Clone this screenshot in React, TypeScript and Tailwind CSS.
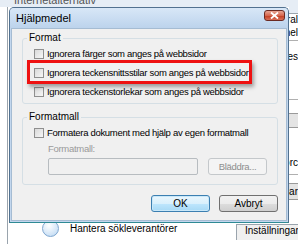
import React from 'react';

const font = "font-['Liberation_Sans',Arial,sans-serif]";

function Check() {
  return (
    <span className="w-[10px] h-[10px] shrink-0 border border-[#8f8f8f] bg-[linear-gradient(135deg,#d9d9d9,#f7f7f7)]" />
  );
}

function CheckRow({ label, h = 'h-[19px]' }: { label: string; h?: string }) {
  return (
    <div className={`${h} flex items-center gap-[3px] pl-[11px]`}>
      <Check />
      <span className="leading-[12px] whitespace-nowrap">{label}</span>
    </div>
  );
}

function VistaButton({ children, primary = false, disabled = false }: { children: React.ReactNode; primary?: boolean; disabled?: boolean }) {
  return (
    <div
      className={`w-[59px] h-[17px] flex items-center justify-center rounded-[3px] border leading-[12px] ${
        disabled
          ? 'border-[#c4c8cb] bg-[#f4f4f4] text-[#8d8d8d]'
          : primary
          ? 'border-[#3c7fb1] bg-[linear-gradient(#eaf6fd_0%,#d9f0fc_50%,#bee6fd_51%,#a7d9f5_100%)] shadow-[inset_0_0_0_1px_#c9e8f9]'
          : 'border-[#707070] bg-[linear-gradient(#f2f2f2_0%,#ebebeb_50%,#dddddd_51%,#cfcfcf_100%)]'
      }`}
    >
      {children}
    </div>
  );
}

function Dialog() {
  return (
    <div className="absolute left-[9px] top-[7px] w-[280px] h-[216px] flex flex-col rounded-t-[5px] border border-[#52718f] border-b-[#2e8a94] bg-[#c3d7ee]">
      {/* title bar */}
      <div className="relative h-[20px] shrink-0 flex items-center pl-[6px] rounded-t-[4px] bg-[linear-gradient(#d8e7f7,#bcd3ec)]">
        <span className="text-[11px] leading-[12px] text-black">Hjälpmedel</span>
        <div className="absolute right-[3px] top-[2px] w-[21px] h-[11px] rounded-[3px] border border-[#6b2a22] bg-[linear-gradient(#e8a594_0%,#d6674f_50%,#c23a1d_51%,#d8705a_100%)] flex items-center justify-center">
          <svg width="9" height="7" viewBox="0 0 9 7">
            <path d="M1 0.5 L8 6.5 M8 0.5 L1 6.5" stroke="#ffffff" strokeWidth="1.8" />
          </svg>
        </div>
      </div>
      {/* client */}
      <div className="flex-1 ml-[1px] mr-[1px] mb-[1px] bg-[#f0f0f0] border border-[#a5bcd3] pl-[10px] pr-[8px] pt-[3px] text-[9.5px] tracking-[-0.3px]">
        <fieldset className="rounded-[3px] border border-[#d5dfe5] pb-[2px]">
          <legend className="ml-[4px] px-[2px] leading-[12px] text-[10px] tracking-normal">Format</legend>
          <CheckRow label="Ignorera färger som anges på webbsidor" />
          <CheckRow label="Ignorera teckensnittsstilar som anges på webbsidor" />
          <CheckRow label="Ignorera teckenstorlekar som anges på webbsidor" />
        </fieldset>
        <fieldset className="mt-[7px] rounded-[3px] border border-[#d5dfe5] pb-[9px]">
          <legend className="ml-[4px] px-[2px] leading-[12px] text-[10px] tracking-normal">Formatmall</legend>
          <CheckRow label="Formatera dokument med hjälp av egen formatmall" h="h-[20px]" />
          <div className="pl-[25px] h-[12px] leading-[12px] text-[#9a9a9a]">Formatmall:</div>
          <div className="mt-[3px] pl-[25px] flex gap-[10px]">
            <div className="w-[150px] h-[17px] rounded-[2px] border border-[#b7bcc0] bg-[#f0f0f0]" />
            <VistaButton disabled>Bläddra...</VistaButton>
          </div>
        </fieldset>
        <div className="mt-[10px] flex justify-end gap-[9px] text-[10px] tracking-normal">
          <VistaButton primary>OK</VistaButton>
          <VistaButton>Avbryt</VistaButton>
        </div>
      </div>
    </div>
  );
}

function Backdrop() {
  return (
    <div className="absolute inset-0 flex flex-col">
      <div className="h-[7px] shrink-0 bg-[#e6edf5] overflow-hidden pl-[14px]">
        <div className="-mt-[6px] text-[11px] leading-[12px] text-[#555]">Internetalternativ</div>
      </div>
      <div className="flex-1 flex">
        <div className="w-[8px] shrink-0 border-r border-[#9aa4ad] bg-white" />
        <div className="flex-1 flex flex-col justify-end bg-white">
          <div className="h-[22px] flex items-start">
            <div className="ml-[34px] mt-[-2px] w-[17px] h-[17px] rounded-full border border-[#7ea6cf] bg-[radial-gradient(circle_at_40%_30%,#ffffff,#b9d6f2)]" />
            <span className="ml-[11px] mt-[1px] leading-[12px]">Hantera sökleverantörer</span>
            <div className="ml-auto w-[62px] h-[16px] mt-[2px] border-l border-t border-[#9aa4ad] bg-[#f0f0f0] pl-[8px] leading-[12px] overflow-hidden whitespace-nowrap">Inställningar</div>
          </div>
        </div>
      </div>
      {/* right column of the parent window peeking out */}
      <div className="absolute left-[289px] top-[0px] w-[9px] h-[224px] bg-white overflow-hidden flex flex-col items-end leading-[12px] whitespace-nowrap">
        <div className="self-stretch h-[14px] shrink-0 bg-[#e6edf5] border-b border-[#9aa4ad]" />
        <div className="h-[13px] shrink-0">ral</div>
        <div className="h-[14px] shrink-0 self-stretch border-b border-[#b0b0b0] flex justify-end">nel</div>
        <div className="h-[59px] shrink-0 pt-[10px] self-stretch border-b border-[#b0b0b0] flex justify-end">res</div>
        <div className="self-stretch h-[15px] shrink-0 mt-[13px] bg-[#e4e4e4] border-y border-[#9a9a9a]" />
        <div className="self-stretch h-[47px] shrink-0 pt-[29px] border-b border-[#b0b0b0] flex justify-end">orc</div>
        <div className="self-stretch h-[17px] shrink-0 mt-[8px] bg-[#e4e4e4] border-y border-[#9a9a9a] flex items-center justify-end">gar</div>
      </div>
    </div>
  );
}

export default function App() {
  return (
    <div className={`relative w-[298px] h-[244px] overflow-hidden bg-white text-[10px] text-black ${font}`}>
      <Backdrop />
      <Dialog />
      <div className="absolute left-[27px] top-[60px] w-[225px] h-[24px] border-[3px] border-[#ee1111] shadow-[2px_3px_4px_rgba(0,0,0,0.35)]" />
    </div>
  );
}
